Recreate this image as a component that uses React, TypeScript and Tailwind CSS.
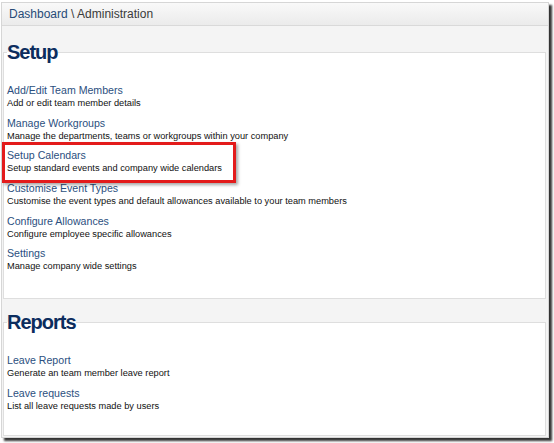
const setupItems = [
  ['Add/Edit Team Members', 'Add or edit team member details'],
  ['Manage Workgroups', 'Manage the departments, teams or workgroups within your company'],
  ['Setup Calendars', 'Setup standard events and company wide calendars'],
  ['Customise Event Types', 'Customise the event types and default allowances available to your team members'],
  ['Configure Allowances', 'Configure employee specific allowances'],
  ['Settings', 'Manage company wide settings'],
];

const reportItems = [
  ['Leave Report', 'Generate an team member leave report'],
  ['Leave requests', 'List all leave requests made by users'],
];

function Section({ title, items, className }: { title: string; items: string[][]; className: string }) {
  return (
    <fieldset className={className}>
      <legend className="text-[20px] leading-[20px] font-bold tracking-[-1px] text-[#0c2d5e]">{title}</legend>
      <ul className="mt-[22px] flex flex-col gap-[6.7px]">
        {items.map(([name, desc]) => (
          <li key={name}>
            <a href="#" className="block text-[10.6px] leading-[13px] text-[#2b4f80]">
              {name}
            </a>
            <p className="text-[9.25px] leading-[13px] text-[#111]">{desc}</p>
          </li>
        ))}
      </ul>
    </fieldset>
  );
}

export default function App() {
  return (
    <div className="relative min-h-[443px] bg-white pt-[2px] pl-[1px] font-['Liberation_Sans',Arial,sans-serif]">
      <div className="w-[548px] border border-[#d6d6d6] shadow-[3px_3px_2px_rgba(0,0,0,0.8)]">
        {/* breadcrumb */}
        <div className="h-[23px] border-b border-[#d9d9d9] bg-linear-to-b from-[#f9f9f9] to-[#ebebeb] pl-[7px] pt-[1px] text-[12px] leading-[21px]">
          <a href="#" className="text-[#274b77]">Dashboard</a>
          <span className="text-[#3a3a3a]"> \ Administration</span>
        </div>

        <div className="bg-[#f4f4f4] pt-[16px] pr-[2px] pb-[1px] pl-[1px]">
          <Section title="Setup" items={setupItems} className="border border-[#dedede] bg-white pl-[3px] pb-[25px]" />
          <Section title="Reports" items={reportItems} className="mt-[13px] border border-[#dedede] bg-white pl-[3px] pb-[22px]" />
        </div>
      </div>

      {/* highlight annotation */}
      <div className="absolute left-[2px] top-[142px] h-[41px] w-[234px] border-[3px] border-[#e31b1b] shadow-[2px_2px_3px_rgba(0,0,0,0.35)]" />
    </div>
  );
}
